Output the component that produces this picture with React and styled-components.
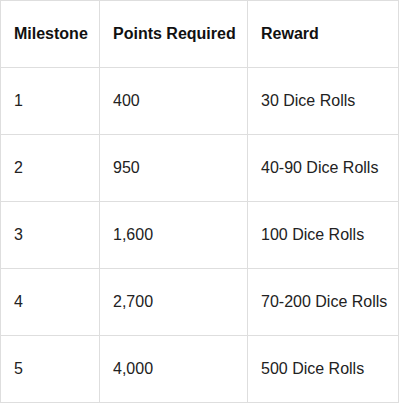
import React from "react";
import styled, { createGlobalStyle } from "styled-components";

const GlobalStyle = createGlobalStyle`
  body {
    margin: 0;
    background: #fff;
    font-family: "Liberation Sans", Arial, sans-serif;
  }
`;

const rows = [
  { milestone: "1", points: "400", reward: "30 Dice Rolls" },
  { milestone: "2", points: "950", reward: "40-90 Dice Rolls" },
  { milestone: "3", points: "1,600", reward: "100 Dice Rolls" },
  { milestone: "4", points: "2,700", reward: "70-200 Dice Rolls" },
  { milestone: "5", points: "4,000", reward: "500 Dice Rolls" },
];

const App = () => {
  return (
    <>
      <GlobalStyle />
      <Table>
        <colgroup>
          <col style={{ width: 99 }} />
          <col style={{ width: 148 }} />
          <col />
        </colgroup>
        <thead>
          <tr>
            <HeadCell>Milestone</HeadCell>
            <HeadCell>Points Required</HeadCell>
            <HeadCell>Reward</HeadCell>
          </tr>
        </thead>
        <tbody>
          {rows.map((row) => (
            <tr key={row.milestone}>
              <Cell>{row.milestone}</Cell>
              <Cell>{row.points}</Cell>
              <Cell>{row.reward}</Cell>
            </tr>
          ))}
        </tbody>
      </Table>
    </>
  );
};

const Table = styled.table`
  width: 399px;
  border-collapse: collapse;
  table-layout: fixed;
  color: #222;
  font-size: 16px;
`;

const Cell = styled.td`
  height: 67px;
  box-sizing: border-box;
  padding: 0 13px;
  border: 1px solid #dedede;
  text-align: left;
  vertical-align: middle;
  white-space: nowrap;
`;

const HeadCell = styled(Cell).attrs({ as: "th" })`
  font-weight: bold;
  color: #111;
`;

export default App;
